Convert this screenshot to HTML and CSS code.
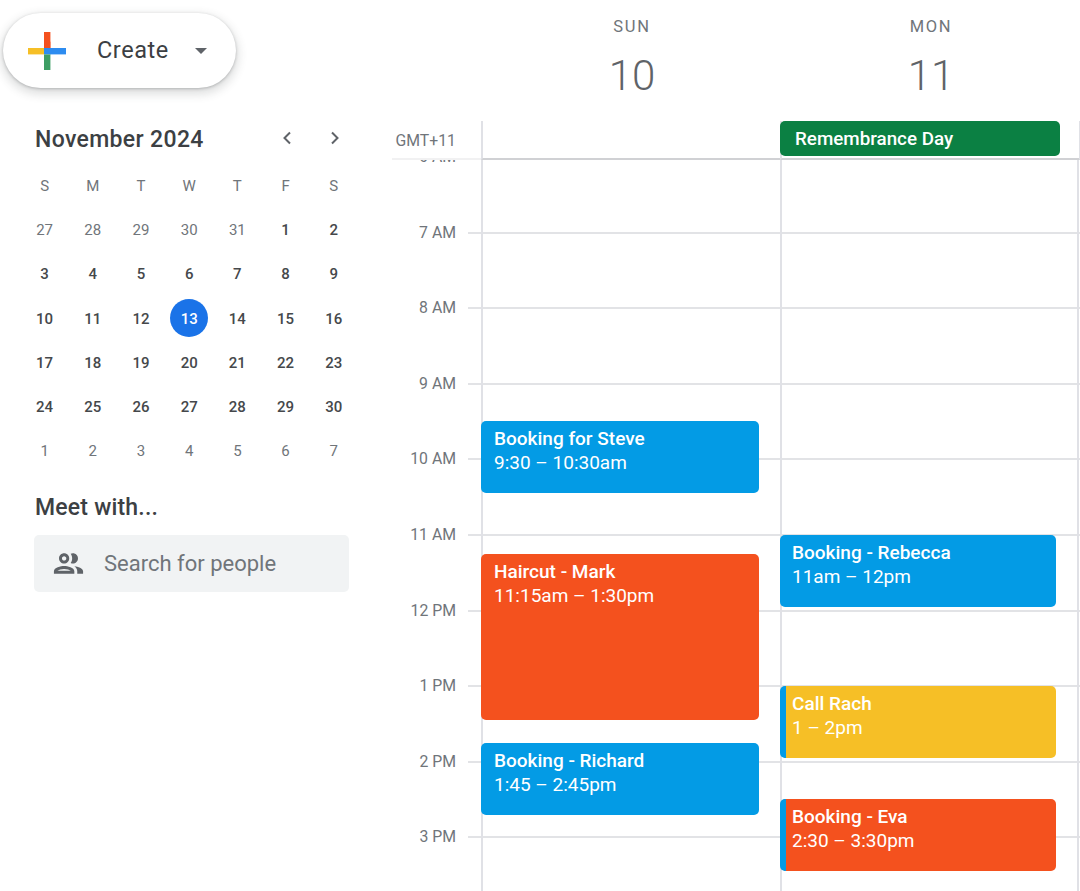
FILE: index.html
```html
<!DOCTYPE html>
<html lang="en">
<head>
<meta charset="utf-8">
<title>Calendar</title>
<link rel="stylesheet" href="styles.css">
</head>
<body>
<div class="app">
  <aside class="sidebar">
    <button class="create">
      <svg class="create-icon" width="38" height="38" viewBox="0 0 38 38" aria-hidden="true">
        <rect x="16" y="0" width="6.4" height="16" fill="#f4511e"/>
        <polygon points="16,16 22.4,16 22.4,9.6" fill="#f4511e"/>
        <rect x="0" y="16" width="16" height="6.4" fill="#f6bf26"/>
        <polygon points="16,16 16,22.4 22.4,22.4 22.4,16" fill="#2d8cf0"/>
        <rect x="22" y="16" width="16" height="6.4" fill="#2d8cf0"/>
        <rect x="16" y="22.4" width="6.4" height="15.6" fill="#3d9e64"/>
      </svg>
      <span class="create-label">Create</span>
      <span class="create-caret"></span>
    </button>

    <div class="mini-head">
      <h2 class="mini-title">November 2024</h2>
      <div class="mini-nav">
        <svg width="24" height="24" viewBox="0 0 24 24" aria-hidden="true"><path d="M15 6.5 9.5 12l5.5 5.5" fill="none" stroke="#5f6368" stroke-width="2"/></svg>
        <svg width="24" height="24" viewBox="0 0 24 24" aria-hidden="true"><path d="M9 6.5 14.5 12 9 17.5" fill="none" stroke="#5f6368" stroke-width="2"/></svg>
      </div>
    </div>

    <div class="mini-grid">
      <span class="dow">S</span><span class="dow">M</span><span class="dow">T</span><span class="dow">W</span><span class="dow">T</span><span class="dow">F</span><span class="dow">S</span>
      <span class="off">27</span><span class="off">28</span><span class="off">29</span><span class="off">30</span><span class="off">31</span><span>1</span><span>2</span>
      <span>3</span><span>4</span><span>5</span><span>6</span><span>7</span><span>8</span><span>9</span>
      <span>10</span><span>11</span><span>12</span><span class="today">13</span><span>14</span><span>15</span><span>16</span>
      <span>17</span><span>18</span><span>19</span><span>20</span><span>21</span><span>22</span><span>23</span>
      <span>24</span><span>25</span><span>26</span><span>27</span><span>28</span><span>29</span><span>30</span>
      <span class="off">1</span><span class="off">2</span><span class="off">3</span><span class="off">4</span><span class="off">5</span><span class="off">6</span><span class="off">7</span>
    </div>

    <h2 class="meet">Meet with...</h2>
    <div class="search">
      <svg width="35" height="35" viewBox="0 0 24 24" aria-hidden="true"><path fill="#5f6368" d="M9 13.75c-2.34 0-7 1.17-7 3.5V19h14v-1.75c0-2.33-4.66-3.5-7-3.5zM4.34 17c.84-.58 2.87-1.25 4.66-1.25s3.82.67 4.66 1.25H4.34zM9 12c1.93 0 3.5-1.57 3.5-3.5S10.93 5 9 5 5.5 6.57 5.5 8.5 7.07 12 9 12zm0-5c.83 0 1.5.67 1.5 1.5S9.83 10 9 10s-1.5-.67-1.5-1.5S8.17 7 9 7zm7.04 6.81c1.16.84 1.96 1.96 1.96 3.44V19h4v-1.75c0-2.02-3.5-3.17-5.96-3.44zM15 12c1.93 0 3.5-1.57 3.5-3.5S16.93 5 15 5c-.54 0-1.04.13-1.5.35.63.89 1 1.98 1 3.15s-.37 2.26-1 3.15c.46.22.96.35 1.5.35z"/></svg>
      <span class="search-text">Search for people</span>
    </div>
  </aside>

  <main class="week">
    <div class="day-heads">
      <div class="head-gutter"></div>
      <div class="day-head"><div class="day-name">SUN</div><div class="day-num">10</div></div>
      <div class="day-head"><div class="day-name">MON</div><div class="day-num">11</div></div>
    </div>

    <div class="allday">
      <div class="tz">GMT+11</div>
      <div class="allday-col"></div>
      <div class="allday-col"><div class="allday-event">Remembrance Day</div></div>
      <div class="allday-end"></div>
    </div>

    <div class="timegrid">
      <div class="hours">
        <div class="hour"><span class="hour-label">6 AM</span><span class="hour-line"></span></div>
        <div class="hour"><span class="hour-label">7 AM</span><span class="hour-line"></span></div>
        <div class="hour"><span class="hour-label">8 AM</span><span class="hour-line"></span></div>
        <div class="hour"><span class="hour-label">9 AM</span><span class="hour-line"></span></div>
        <div class="hour"><span class="hour-label">10 AM</span><span class="hour-line"></span></div>
        <div class="hour"><span class="hour-label">11 AM</span><span class="hour-line"></span></div>
        <div class="hour"><span class="hour-label">12 PM</span><span class="hour-line"></span></div>
        <div class="hour"><span class="hour-label">1 PM</span><span class="hour-line"></span></div>
        <div class="hour"><span class="hour-label">2 PM</span><span class="hour-line"></span></div>
        <div class="hour"><span class="hour-label">3 PM</span><span class="hour-line"></span></div>
        <div class="hour"><span class="hour-label"></span><span class="hour-line"></span></div>
      </div>
      <div class="cols">
        <div class="col">
          <div class="event blue steve"><b>Booking for Steve</b><span>9:30 – 10:30am</span></div>
          <div class="event tomato mark"><b>Haircut - Mark</b><span>11:15am – 1:30pm</span></div>
          <div class="event blue richard"><b>Booking - Richard</b><span>1:45 – 2:45pm</span></div>
        </div>
        <div class="col">
          <div class="event blue rebecca"><b>Booking - Rebecca</b><span>11am – 12pm</span></div>
          <div class="event banana striped rach"><b>Call Rach</b><span>1 – 2pm</span></div>
          <div class="event tomato striped eva"><b>Booking - Eva</b><span>2:30 – 3:30pm</span></div>
        </div>
      </div>
    </div>
  </main>
</div>
</body>
</html>
```
FILE: styles.css
```css
* { box-sizing: border-box; }
html, body { margin: 0; height: 100%; overflow: hidden; background: #fff; }
body { font-family: Roboto, "Liberation Sans", sans-serif; color: #3c4043; }

.app { display: flex; width: 1080px; height: 891px; }

/* Sidebar */
.sidebar { width: 382px; flex: none; padding: 13px 0 0 3px; }

.create {
  display: flex; align-items: center;
  width: 233px; height: 75px; padding: 0 0 0 25px;
  border: 0; border-radius: 38px; background: #fff;
  font-family: inherit;
  box-shadow: 0 1px 3px rgba(60,64,67,.3), 0 4px 8px 3px rgba(60,64,67,.15);
}
.create-icon { flex: none; }
.create-label { margin: 0 0 2px 31px; font-size: 23.5px; letter-spacing: .55px; color: #3c4043; }
.create-caret {
  margin-left: 26px; width: 0; height: 0;
  border-left: 6.5px solid transparent; border-right: 6.5px solid transparent;
  border-top: 6.5px solid #5f6368;
}

.mini-head { display: flex; align-items: center; justify-content: space-between; margin: 36px 35px 0 32px; height: 28px; }
.mini-title, .meet { margin: 0; font-size: 23px; font-weight: 500; color: #3c4043; letter-spacing: .2px; }
.mini-title { padding-top: 2px; letter-spacing: .35px; }
.mini-nav { display: flex; gap: 24px; }

.mini-grid {
  display: grid; grid-template-columns: repeat(7, 48.2px); grid-auto-rows: 44.2px;
  margin: 12px 0 0 17.5px; font-size: 15px; font-weight: 500; color: #45484b;
}
.mini-grid span { display: flex; align-items: center; justify-content: center; }
.mini-grid .dow, .mini-grid .off { color: #70757a; font-weight: 400; }
.mini-grid .today { position: relative; z-index: 0; color: #fff; }
.mini-grid .today::before {
  content: ""; position: absolute; z-index: -1; left: 5px; top: 2px;
  width: 38px; height: 38px; border-radius: 50%; background: #1a73e8;
}

.meet { margin: 21px 0 0 32px; line-height: 28px; }

.search {
  display: flex; align-items: center;
  width: 315px; height: 57px; margin: 13px 0 0 31px; padding-left: 17px;
  border-radius: 5px; background: #f1f3f4;
}
.search-text { margin-left: 18px; font-size: 22px; color: #70757a; }

/* Week */
.week { flex: 1; min-width: 0; display: flex; flex-direction: column; }

.day-heads { display: grid; grid-template-columns: 99px 299px 299px; height: 121px; }
.day-head { display: flex; flex-direction: column; align-items: center; padding: 17px 0 0 3px; color: #70757a; }
.day-name { font-size: 16.5px; font-weight: 400; letter-spacing: 1.7px; line-height: 20px; }
.day-num { margin-top: 11px; font-size: 42px; font-weight: 300; line-height: 56px; color: #5f6368; }

.allday {
  position: relative; z-index: 2;
  display: grid; grid-template-columns: 99px 299px 299px 1fr;
  height: 39px;
}
.tz {
  margin-left: 10px; padding: 11px 25px 0 0; text-align: right;
  font-size: 15.8px; line-height: 18px; color: #70757a;
  border-bottom: 2px solid #f1f1f2;
}
.allday-col { position: relative; border-left: 2px solid #e0e1e6; border-bottom: 2px solid #d0d1d4; }
.allday-end { border-left: 2px solid #e0e1e6; border-bottom: 2px solid #d0d1d4; }
.allday-event {
  height: 35px; margin-left: -2px; width: 280px; padding: 1px 0 0 15px;
  border-radius: 5px; background: #0b8043; color: #fff;
  font-size: 18.8px; font-weight: 500; line-height: 35px;
}

.timegrid { position: relative; flex: 1; min-height: 0; overflow: hidden; }

.hours { margin-top: -4px; }
.hour { display: flex; height: 75.6px; }
.hour-label {
  width: 74px; flex: none; height: 20px; margin-top: -9px;
  text-align: right; font-size: 15.8px; line-height: 20px; color: #70757a;
}
.hour-line { flex: 1; height: 2px; margin-left: 12px; background: #e2e3e6; }

.cols { position: absolute; left: 99px; top: 0; bottom: 0; display: flex; }
.col { position: relative; width: 299px; border-left: 2px solid #e0e1e6; }
.col + .col { width: 299px; border-right: 2px solid #e0e1e6; }

.event {
  position: absolute; left: -2px; width: 278px; height: 72px;
  padding: 6px 0 0 13px; border-radius: 5px;
  color: #fff; font-size: 19px; line-height: 24px;
}
.event b, .event span { display: block; }
.event b { font-weight: 500; }

.blue { background: #039be5; }
.tomato { background: #f4511e; }
.banana { background: #f6bf26; }
.col + .col .event { left: -2px; width: 276px; padding-left: 12px; }
.col + .col .striped { padding-left: 6px; border-left: 6px solid #039be5; }

.steve { top: 261px; }
.mark { top: 394px; height: 166px; }
.richard { top: 582.5px; }
.rebecca { top: 375px; }
.rach { top: 526px; }
.eva { top: 639px; }
```
